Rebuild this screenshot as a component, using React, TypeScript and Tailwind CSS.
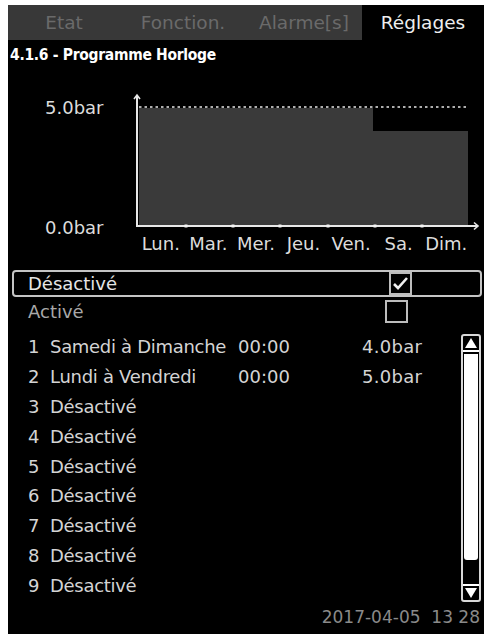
import React from 'react';

const days = ['Lun.', 'Mar.', 'Mer.', 'Jeu.', 'Ven.', 'Sa.', 'Dim.'];

const rows = [
  { n: 1, name: 'Samedi à Dimanche', time: '00:00', val: '4.0bar' },
  { n: 2, name: 'Lundi à Vendredi', time: '00:00', val: '5.0bar' },
  { n: 3, name: 'Désactivé' },
  { n: 4, name: 'Désactivé' },
  { n: 5, name: 'Désactivé' },
  { n: 6, name: 'Désactivé' },
  { n: 7, name: 'Désactivé' },
  { n: 8, name: 'Désactivé' },
  { n: 9, name: 'Désactivé' },
];

function Check({ on }: { on?: boolean }) {
  return (
    <div className="w-[23px] h-[23px] border-2 border-[#bdbdbd] flex items-center justify-center">
      {on && (
        <svg width="17" height="15" viewBox="0 0 17 15">
          <polyline points="2,8 6,12 15,2" fill="none" stroke="#f0f0f0" strokeWidth="2.6" />
        </svg>
      )}
    </div>
  );
}

function Chart() {
  return (
    <svg width="354" height="144" viewBox="0 0 354 144" className="block">
      <path d="M9 18 H243 V41 H338 V135 H9 Z" fill="#3a3a3a" />
      <line x1="9" y1="17" x2="338" y2="17" stroke="#e8e8e8" strokeWidth="1.6" strokeDasharray="2.5 3" />
      <line x1="7" y1="6" x2="7" y2="137" stroke="#e8e8e8" strokeWidth="2" />
      <polyline points="4,9 7,5 10,9" fill="none" stroke="#e8e8e8" strokeWidth="1.6" />
      <line x1="6" y1="136" x2="348" y2="136" stroke="#e8e8e8" strokeWidth="2" />
      <polyline points="344,132.5 348,136 344,139.5" fill="none" stroke="#e8e8e8" strokeWidth="1.6" />
      {[56, 103, 150, 198, 245, 292].map((x) => (
        <rect key={x} x={x - 1.5} y="134.5" width="3" height="3" fill="#f4f4f4" />
      ))}
    </svg>
  );
}

function ScrollBar() {
  return (
    <div className="w-[20px] h-[268px] border-2 border-[#d8d8d8] rounded-[3px] flex flex-col items-stretch bg-black">
      <div className="h-[16px] flex items-center justify-center border-b-2 border-white">
        <svg width="12" height="10" viewBox="0 0 12 10">
          <polygon points="6,0 12,10 0,10" fill="#ffffff" />
        </svg>
      </div>
      <div className="h-[206px] mt-[2px] mx-[1px] bg-white rounded-b-[3px]" />
      <div className="flex-1" />
      <div className="h-[16px] flex items-center justify-center border-t-2 border-white">
        <svg width="12" height="10" viewBox="0 0 12 10">
          <polygon points="0,0 12,0 6,10" fill="#ffffff" />
        </svg>
      </div>
    </div>
  );
}

export default function App() {
  return (
    <div
      className="w-[484px] h-[634px] bg-white pl-[8px] pt-[5px] overflow-hidden"
      style={{ fontFamily: '"DejaVu Sans", "Liberation Sans", sans-serif' }}
    >
      <div className="w-[476px] h-[629px] bg-black flex flex-col">
        {/* tabs */}
        <div className="h-[35px] flex text-[18.5px] leading-[35px]">
          <div className="w-[354px] flex bg-[#383838] text-[#6a6a6a]">
            <div className="w-[112px] text-center">Etat</div>
            <div className="w-[126px] text-center">Fonction.</div>
            <div className="w-[116px] text-center">Alarme[s]</div>
          </div>
          <div className="flex-1 text-center text-[#eeeeee]">Réglages</div>
        </div>

        {/* title */}
        <div
          className="h-[30px] pl-[2px] text-[15.5px] leading-[30px] font-bold text-white tracking-[-0.3px]"
          style={{ fontFamily: '"DejaVu Sans Condensed", "DejaVu Sans", sans-serif' }}
        >
          4.1.6 - Programme Horloge
        </div>

        {/* chart */}
        <div className="pt-[20px] flex">
          <div className="w-[122px] flex flex-col pt-[8px] pl-[37px] gap-[100px] text-[18px] leading-[20px] text-[#dcdcdc]">
            <span>5.0bar</span>
            <span>0.0bar</span>
          </div>
          <div className="flex flex-col">
            <Chart />
            <div className="ml-[7px] w-[333px] grid grid-cols-7 text-[18px] leading-[20px] text-[#dcdcdc]">
              {days.map((d) => (
                <span key={d} className="text-center whitespace-nowrap">{d}</span>
              ))}
            </div>
          </div>
        </div>

        {/* options */}
        <div className="mt-[16px] ml-[4px] w-[470px] h-[27px] border-2 border-[#c4c4c4] rounded-[4px] flex items-center text-[18px] text-[#e6e6e6]">
          <span className="pl-[14px] w-[375px]">Désactivé</span>
          <Check on />
        </div>
        <div className="h-[29px] ml-[4px] flex items-center text-[18px] text-[#a8a8a8]">
          <span className="pl-[16px] w-[373px]">Activé</span>
          <Check />
        </div>

        {/* list */}
        <div className="flex mt-[6px]">
          <div className="flex-1 flex flex-col text-[18px] text-[#d4d4d4]">
            {rows.map((r) => (
              <div key={r.n} className="h-[29.8px] flex items-center">
                <span className="w-[42px] pl-[20px]">{r.n}</span>
                <span className="w-[188px] whitespace-nowrap tracking-[-0.3px]">{r.name}</span>
                <span className="w-[124px]">{r.time ?? ''}</span>
                <span className="tracking-[0.3px]">{r.val ?? ''}</span>
              </div>
            ))}
          </div>
          <div className="pr-[3px] pt-[2px]">
            <ScrollBar />
          </div>
        </div>

        {/* date */}
        <div className="flex-1 flex items-center justify-end pr-[4px] text-[17px] text-[#8a8a8a]">
          2017-04-05&nbsp;&nbsp;13 28
        </div>
      </div>
    </div>
  );
}
